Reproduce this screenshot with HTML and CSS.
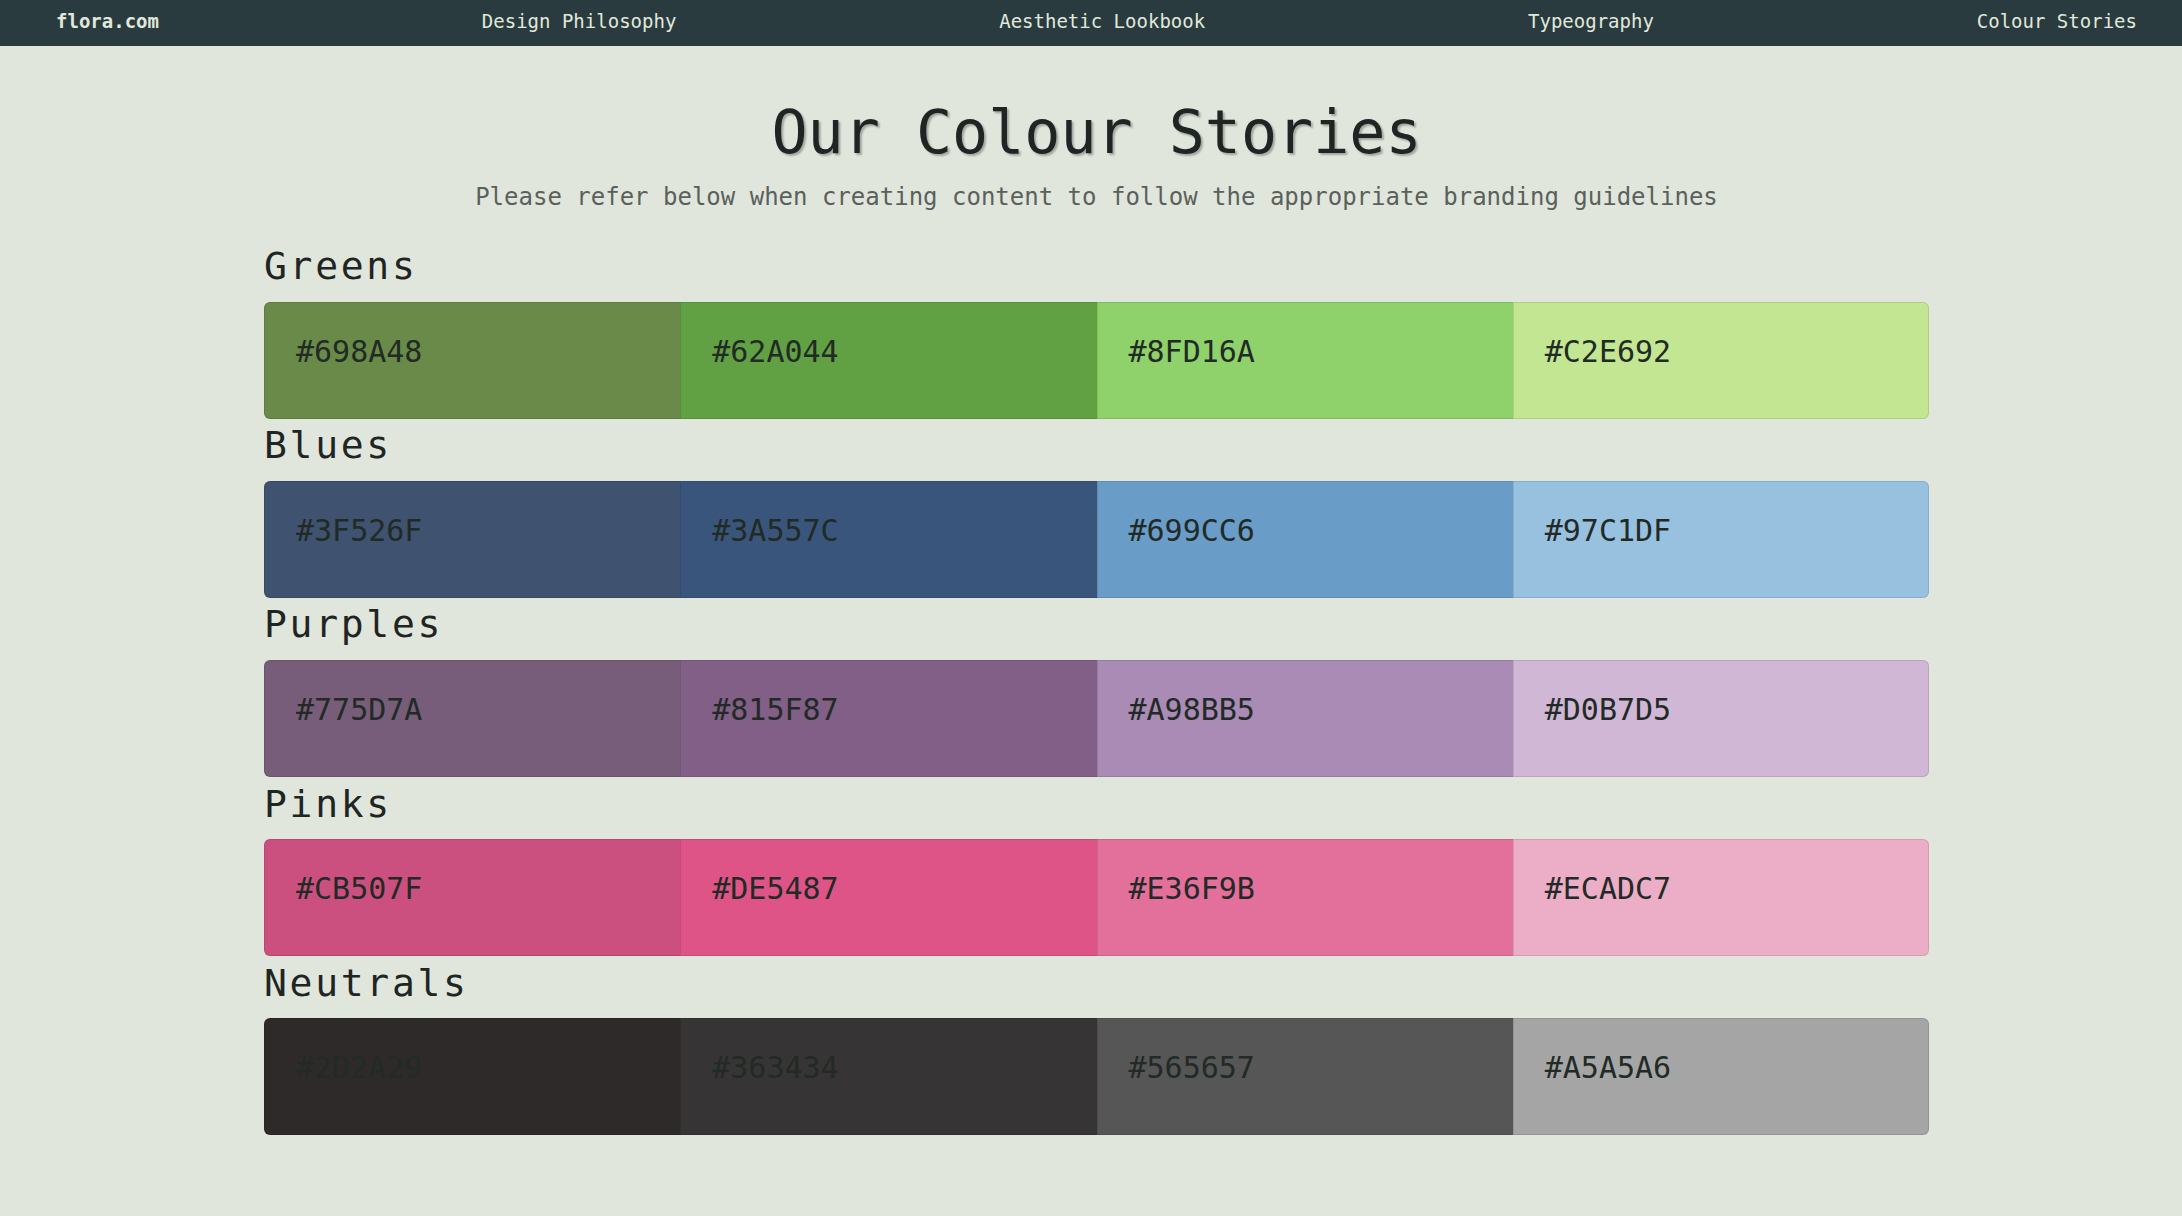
FILE: index.html
```html
<!DOCTYPE html>
<html lang="en">
<head>
<meta charset="utf-8">
<title>flora.com — Colour Stories</title>
<link rel="stylesheet" href="styles.css">
</head>
<body>
<nav class="topnav">
  <a class="brand" href="#">flora.com</a>
  <a class="navlink" href="#">Design Philosophy</a>
  <a class="navlink" href="#">Aesthetic Lookbook</a>
  <a class="navlink" href="#">Typeography</a>
  <a class="navlink" href="#">Colour Stories</a>
</nav>
<main class="content">
  <h1 class="title">Our Colour Stories</h1>
  <p class="subtitle">Please refer below when creating content to follow the appropriate branding guidelines</p>

  <section class="story">
    <h2 class="story-name">Greens</h2>
    <div class="palette">
      <div class="swatch" style="background:#698A48">#698A48</div>
      <div class="swatch" style="background:#62A044">#62A044</div>
      <div class="swatch" style="background:#8FD16A">#8FD16A</div>
      <div class="swatch" style="background:#C2E692">#C2E692</div>
    </div>
  </section>

  <section class="story">
    <h2 class="story-name">Blues</h2>
    <div class="palette">
      <div class="swatch" style="background:#3F526F">#3F526F</div>
      <div class="swatch" style="background:#3A557C">#3A557C</div>
      <div class="swatch" style="background:#699CC6">#699CC6</div>
      <div class="swatch" style="background:#97C1DF">#97C1DF</div>
    </div>
  </section>

  <section class="story">
    <h2 class="story-name">Purples</h2>
    <div class="palette">
      <div class="swatch" style="background:#775D7A">#775D7A</div>
      <div class="swatch" style="background:#815F87">#815F87</div>
      <div class="swatch" style="background:#A98BB5">#A98BB5</div>
      <div class="swatch" style="background:#D0B7D5">#D0B7D5</div>
    </div>
  </section>

  <section class="story">
    <h2 class="story-name">Pinks</h2>
    <div class="palette">
      <div class="swatch" style="background:#CB507F">#CB507F</div>
      <div class="swatch" style="background:#DE5487">#DE5487</div>
      <div class="swatch" style="background:#E36F9B">#E36F9B</div>
      <div class="swatch" style="background:#ECADC7">#ECADC7</div>
    </div>
  </section>

  <section class="story">
    <h2 class="story-name">Neutrals</h2>
    <div class="palette">
      <div class="swatch" style="background:#2D2A29">#2D2A29</div>
      <div class="swatch" style="background:#363434">#363434</div>
      <div class="swatch" style="background:#565657">#565657</div>
      <div class="swatch" style="background:#A5A5A6">#A5A5A6</div>
    </div>
  </section>
</main>
</body>
</html>
```

FILE: styles.css
```css
* {
  box-sizing: border-box;
}

html, body {
  margin: 0;
  padding: 0;
}

body {
  background: #e0e6dc;
  color: #1e2523;
  font-family: "DejaVu Sans Mono", "Liberation Mono", monospace;
  min-height: 1216px;
}

.topnav {
  height: 46px;
  background: #293b3e;
  display: flex;
  align-items: center;
  justify-content: space-between;
  padding: 0 45px 3px 56px;
}

.topnav a {
  color: #e1e8dc;
  text-decoration: none;
  font-size: 19px;
  line-height: 19px;
  white-space: nowrap;
}

.brand {
  font-weight: bold;
}

.content {
  width: 1665px;
  margin: 0 0 0 calc(50% - 827px);
}

.title {
  margin: 56px 0 0;
  font-size: 60px;
  line-height: 60px;
  font-weight: normal;
  text-align: center;
  color: #1e2523;
  text-shadow: 2px 2px 2px rgba(0, 0, 0, 0.28);
}

.subtitle {
  margin: 23px 0 0;
  font-size: 24px;
  line-height: 24px;
  text-align: center;
  color: #5a605b;
  font-weight: normal;
}

.story {
  display: flex;
  flex-direction: column;
}

.story-name {
  margin: 7.7px 0 16.5px;
  font-size: 38px;
  line-height: 38px;
  font-weight: normal;
  letter-spacing: 2.7px;
  color: #1e2523;
}

.story:first-of-type .story-name {
  margin-top: 38px;
}

.palette {
  display: grid;
  grid-template-columns: repeat(4, 1fr);
  height: 117px;
}

.swatch {
  border: 1px solid rgba(0, 0, 0, 0.1);
  border-right: 0;
  padding: 34px 31px 0;
  font-size: 30px;
  line-height: 30px;
  color: #222a25;
}

.swatch:first-child {
  border-radius: 6px 0 0 6px;
}

.swatch:last-child {
  border-right: 1px solid rgba(0, 0, 0, 0.1);
  border-radius: 0 6px 6px 0;
}
```
